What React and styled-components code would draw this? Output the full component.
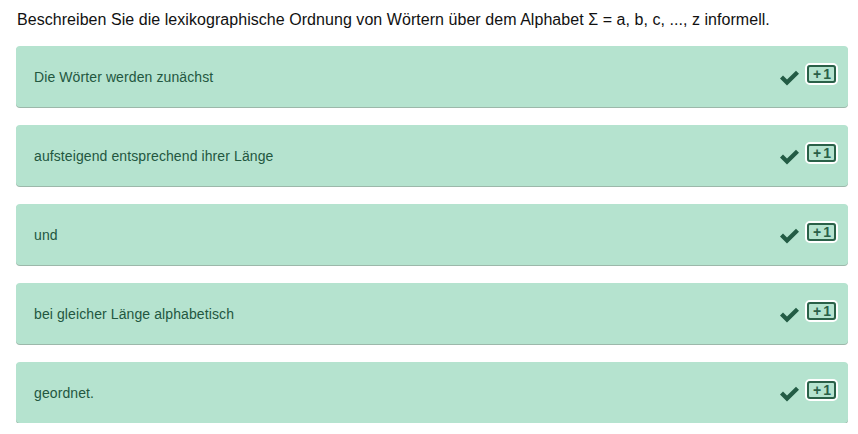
import React from "react";
import styled, { createGlobalStyle } from "styled-components";

const Global = createGlobalStyle`
  html, body { margin: 0; padding: 0; background: #fff; }
  body { font-family: "Liberation Sans", Arial, sans-serif; }
`;

const Page = styled.div`
  padding: 10px 10px 0 16px;
`;

const Title = styled.div`
  font-size: 16px;
  line-height: 20px;
  color: #111;
  letter-spacing: 0.05px;
  margin: 0 0 16px 1px;
`;

const List = styled.div`
  display: flex;
  flex-direction: column;
  gap: 18px;
`;

const Card = styled.div`
  display: flex;
  align-items: center;
  height: 61px;
  background: #b5e3cf;
  border-radius: 4px;
  box-shadow: 0 1px 0 #9cb8aa;
  padding: 0 10px 0 18px;
  box-sizing: border-box;
`;

const Text = styled.div`
  flex: 1;
  font-size: 14px;
  letter-spacing: 0.1px;
  color: #23573f;
`;

const Check = styled.svg`
  width: 21px;
  height: 16px;
  margin-right: 5px;
  margin-top: 3px;
`;

const Badge = styled.div`
  border: 2px solid #fff;
  border-radius: 5px;
  margin-top: -5px;
`;

const BadgeInner = styled.div`
  border: 2px solid #2a6048;
  border-radius: 3px;
  padding: 0 1px 0 4px;
  height: 14px;
  line-height: 14px;
  font-size: 14px;
  font-weight: bold;
  color: #2a6048;
  background: #b5e3cf;
  letter-spacing: 2px;
`;

const items = [
  "Die Wörter werden zunächst",
  "aufsteigend entsprechend ihrer Länge",
  "und",
  "bei gleicher Länge alphabetisch",
  "geordnet.",
];

export default function App() {
  return (
    <Page>
      <Global />
      <Title>
        Beschreiben Sie die lexikographische Ordnung von Wörtern über dem Alphabet Σ = a, b, c, ..., z informell.
      </Title>
      <List>
        {items.map((t) => (
          <Card key={t}>
            <Text>{t}</Text>
            <Check viewBox="0 0 21 16">
              <path d="M1 8.5 L4 5.5 L8 9.5 L17 0.8 L20 3.8 L8 15.5 Z" fill="#235c45" />
            </Check>
            <Badge>
              <BadgeInner>+1</BadgeInner>
            </Badge>
          </Card>
        ))}
      </List>
    </Page>
  );
}
